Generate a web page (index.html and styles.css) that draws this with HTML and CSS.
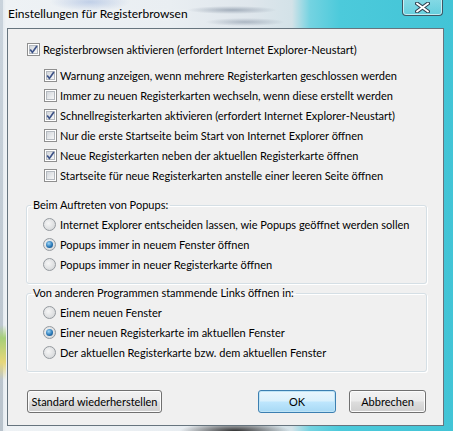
FILE: index.html
```html
<!DOCTYPE html>
<html lang="de">
<head>
    <meta charset="UTF-8">
    <title>Einstellungen für Registerbrowsen</title>
    <link rel="stylesheet" href="styles.css">
</head>
<body>
    <div class="window">
        <div class="titlebar">
            <span class="title">Einstellungen für Registerbrowsen</span>
            <div class="close">
                <svg width="15" height="11" viewBox="0 0 15 11">
                    <path d="M2 1.5 L13 9.5 M13 1.5 L2 9.5" stroke="#2f4150" stroke-width="4" stroke-linecap="round"/>
                    <path d="M2 1.5 L13 9.5 M13 1.5 L2 9.5" stroke="#ffffff" stroke-width="2" stroke-linecap="round"/>
                </svg>
            </div>
        </div>

        <div class="client">
            <label class="row">
                <span class="box"><svg viewBox="0 0 13 13"><path d="M3.2 6.4 L5.4 9.4 L9.9 2.9" /></svg></span>
                Registerbrowsen aktivieren (erfordert Internet Explorer-Neustart)
            </label>

            <div class="sub">
                <label class="row">
                    <span class="box"><svg viewBox="0 0 13 13"><path d="M3.2 6.4 L5.4 9.4 L9.9 2.9" /></svg></span>
                    Warnung anzeigen, wenn mehrere Registerkarten geschlossen werden
                </label>
                <label class="row">
                    <span class="box"></span>
                    Immer zu neuen Registerkarten wechseln, wenn diese erstellt werden
                </label>
                <label class="row">
                    <span class="box"><svg viewBox="0 0 13 13"><path d="M3.2 6.4 L5.4 9.4 L9.9 2.9" /></svg></span>
                    Schnellregisterkarten aktivieren (erfordert Internet Explorer-Neustart)
                </label>
                <label class="row">
                    <span class="box"></span>
                    Nur die erste Startseite beim Start von Internet Explorer öffnen
                </label>
                <label class="row">
                    <span class="box"><svg viewBox="0 0 13 13"><path d="M3.2 6.4 L5.4 9.4 L9.9 2.9" /></svg></span>
                    Neue Registerkarten neben der aktuellen Registerkarte öffnen
                </label>
                <label class="row">
                    <span class="box"></span>
                    Startseite für neue Registerkarten anstelle einer leeren Seite öffnen
                </label>
            </div>

            <fieldset class="group">
                <legend>Beim Auftreten von Popups:</legend>
                <label class="row"><span class="radio"></span>Internet Explorer entscheiden lassen, wie Popups geöffnet werden sollen</label>
                <label class="row"><span class="radio on"></span>Popups immer in neuem Fenster öffnen</label>
                <label class="row"><span class="radio"></span>Popups immer in neuer Registerkarte öffnen</label>
            </fieldset>

            <fieldset class="group second">
                <legend>Von anderen Programmen stammende Links öffnen in:</legend>
                <label class="row"><span class="radio"></span>Einem neuen Fenster</label>
                <label class="row"><span class="radio on"></span>Einer neuen Registerkarte im aktuellen Fenster</label>
                <label class="row"><span class="radio"></span>Der aktuellen Registerkarte bzw. dem aktuellen Fenster</label>
            </fieldset>

            <div class="buttons">
                <button class="btn reset">Standard wiederherstellen</button>
                <button class="btn ok">OK</button>
                <button class="btn cancel">Abbrechen</button>
            </div>
        </div>
    </div>
</body>
</html>
```

FILE: styles.css
```css
html, body {
    margin: 0;
}
body {
    width: 453px;
    height: 431px;
    overflow: hidden;
    font-family: Lato, "Liberation Sans", sans-serif;
    font-size: 11px;
    color: #000;
}

/* glass frame */
.window {
    height: 431px;
    box-sizing: border-box;
    padding: 0 9px 5px 7px;
    display: flex;
    flex-direction: column;
    background:
        linear-gradient(180deg, transparent 325px, #a6cf78 338px, #e6d77a 362px, transparent 380px) 0 0 / 6px 100% no-repeat,
        linear-gradient(180deg, #c9d3dc 0, #b9c3cc 100%) 0 0 / 3px 100% no-repeat,
        radial-gradient(ellipse 45px 4px at 232px 10px, rgba(110, 125, 145, 0.55), transparent),
        radial-gradient(ellipse 40px 4px at 245px 22px, rgba(110, 125, 145, 0.45), transparent),
        radial-gradient(ellipse 40px 9px at 90px 2px, rgba(150, 175, 220, 0.5), transparent),
        radial-gradient(ellipse 55px 9px at 235px 431px, rgba(30, 30, 30, 0.9), transparent),
        linear-gradient(90deg, #dbe3ea 0, #eef2f5 6px, #e9eef2 170px, #dfe6ec 250px, #d3e2e8 292px, #74d3e1 310px, #4ccadb 340px, #42c4d6 100%);
}

.titlebar {
    height: 28px;
    display: flex;
    align-items: flex-start;
}
.title {
    margin: 6px 0 0 1px;
    font-size: 12px;
    text-shadow: 0 0 6px rgba(255, 255, 255, 0.9);
}
.close {
    margin: -1px 1px 0 auto;
    width: 39px;
    height: 16px;
    border: 1px solid #3f5663;
    border-top: none;
    border-radius: 0 0 4px 4px;
    background: linear-gradient(180deg, rgba(255, 255, 255, 0.35), rgba(200, 235, 240, 0.25));
    box-shadow: inset 0 0 0 1px rgba(255, 255, 255, 0.6);
    display: flex;
    align-items: center;
    justify-content: center;
}

.client {
    flex: 1;
    border: 1px solid #66747e;
    background: #f0f0f0;
    padding: 10px 16px 0 18px;
    display: flex;
    flex-direction: column;
    min-width: 0;
}

.row {
    display: flex;
    align-items: center;
    height: 20px;
    gap: 3px;
    white-space: nowrap;
}

/* checkbox */
.box {
    width: 13px;
    height: 13px;
    margin-left: 1px;
    box-sizing: border-box;
    border: 1px solid #8f8f8f;
    background: #fff;
    padding: 1px;
    position: relative;
    flex: none;
}
.box::before {
    content: "";
    display: block;
    width: 9px;
    height: 9px;
    box-sizing: border-box;
    border: 1px solid #b4b9bf;
    background: linear-gradient(135deg, #d2d6db, #f7f7f7);
}
.box svg {
    position: absolute;
    left: -1px;
    top: -1px;
    width: 13px;
    height: 13px;
}
.box path {
    fill: none;
    stroke: #3c5288;
    stroke-width: 1.7;
}

.sub {
    margin: 6px 0 0 17px;
}

/* group boxes */
.group {
    margin: 13px 0 0 0;
    min-width: 0;
    border: 1px solid #d5dfe5;
    border-radius: 3px;
    padding: 2px 8px 9px 16px;
    box-shadow: inset 1px 1px 0 #fff, 1px 1px 0 #fff;
}
.group.second {
    margin-top: 2px;
}
.group legend {
    padding: 0 2px;
    margin-left: -12px;
    line-height: 14px;
}

/* radio */
.radio {
    width: 13px;
    height: 13px;
    box-sizing: border-box;
    border-radius: 50%;
    border: 1px solid #959a9f;
    background: radial-gradient(circle at 40% 40%, #f6f6f6, #d8dadc 75%);
    display: flex;
    align-items: center;
    justify-content: center;
    margin-right: 1px;
    flex: none;
}
.radio.on::after {
    content: "";
    width: 7px;
    height: 7px;
    border-radius: 50%;
    background: radial-gradient(circle at 40% 35%, #9fd6f6, #2a79b8 55%, #0f3e6d);
}

/* buttons */
.buttons {
    display: flex;
    margin: 18px 1px 0 1px;
}
.btn {
    height: 23px;
    font: inherit;
    color: #000;
    white-space: nowrap;
    border: 1px solid #707070;
    border-radius: 3px;
    background: linear-gradient(180deg, #f2f2f2 0, #ebebeb 48%, #dddddd 52%, #cfcfcf 100%);
    box-shadow: inset 0 0 0 1px #fcfcfc;
    padding: 0;
}
.reset {
    width: 135px;
}
.ok {
    width: 78px;
    margin-left: auto;
    border-color: #3c7fb1;
    background: linear-gradient(180deg, #eaf6fd 0, #d9f0fc 48%, #bee6fd 52%, #a7d9f5 100%);
    box-shadow: inset 0 0 0 1px #bfe4f6;
}
.cancel {
    width: 77px;
    margin-left: 13px;
}
```
